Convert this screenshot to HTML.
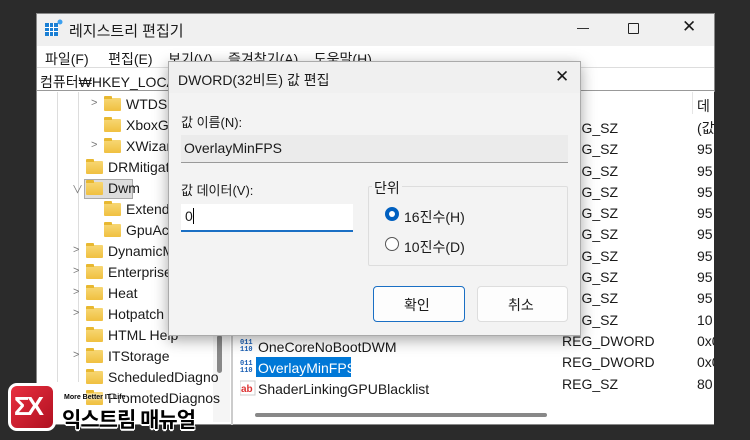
<!DOCTYPE html>
<html><head><meta charset="utf-8"><style>
*{margin:0;padding:0;box-sizing:border-box}
body{width:750px;height:440px;background:#2b2b2b;position:relative;overflow:hidden;font-family:"Liberation Sans","Noto Sans CJK KR",sans-serif;color:#1a1a1a}
.a{position:absolute;white-space:nowrap}
.t{font-size:14px}
.fold{position:absolute;width:17px;height:13px;background:linear-gradient(#f7d774,#f0c040);border-radius:1px}
.fold:before{content:"";position:absolute;left:0;top:-2px;width:8px;height:3px;background:#e8b830;border-radius:1px 1px 0 0}
.chev{position:absolute;font-size:11px;color:#777}
</style></head><body>
<div class="a" style="left:36px;top:13px;width:679px;height:412px;background:#fff;border:1px solid #888"></div>
<div class="a" style="left:37px;top:14px;width:677px;height:32px;background:#f0f0f0"></div>
<svg class="a" style="left:45px;top:19px" width="18" height="18"><rect x="0" y="4" width="13" height="13" fill="#1a7fd4"/><g stroke="#fff" stroke-width="1"><line x1="4.5" y1="4" x2="4.5" y2="17"/><line x1="8.5" y1="4" x2="8.5" y2="17"/><line x1="0" y1="8.5" x2="13" y2="8.5"/><line x1="0" y1="12.5" x2="13" y2="12.5"/></g><circle cx="15" cy="3" r="2.5" fill="#3ba0f0"/></svg>
<div class="a t" style="left:69px;top:20px;font-size:15px">레지스트리 편집기</div>
<div class="a" style="left:577px;top:28px;width:12px;height:1px;background:#333"></div>
<div class="a" style="left:628px;top:23px;width:11px;height:11px;border:1px solid #222;border-radius:1px"></div>
<div class="a" style="left:682px;top:17px;font-size:17px">✕</div>
<div class="a" style="left:37px;top:46px;width:677px;height:21px;background:#fff"></div>
<div class="a t" style="left:45px;top:49px">파일(F)&nbsp;&nbsp;&nbsp;&nbsp;&nbsp;편집(E)&nbsp;&nbsp;&nbsp;&nbsp;보기(V)&nbsp;&nbsp;&nbsp;&nbsp;즐겨찾기(A)&nbsp;&nbsp;&nbsp;&nbsp;도움말(H)</div>
<div class="a" style="left:37px;top:67px;width:677px;height:24px;background:#fff;border-top:1px solid #ddd;border-bottom:1px solid #999"></div>
<div class="a t" style="left:40px;top:72px">컴퓨터₩HKEY_LOCAL_MACHINE</div>
<div class="a" style="left:40px;top:92px;width:170px;height:330px;background:#fff;overflow:hidden"></div>
<div class="a" style="left:57px;top:92px;width:1px;height:290px;background:#ddd"></div>
<div class="a" style="left:78px;top:92px;width:1px;height:290px;background:#ddd"></div>
<div class="a" style="left:213px;top:92px;width:17px;height:330px;background:#f5f5f5"></div>
<div class="a" style="left:217px;top:335px;width:5px;height:38px;background:#888;border-radius:3px"></div>
<div class="a" style="left:231px;top:92px;width:2px;height:333px;background:#ccc"></div>
<div class="a" style="left:84px;top:179px;width:49px;height:20px;background:#ddd;border:1px solid #aaa"></div>
<div class="chev" style="left:91px;top:97px">&gt;</div><div class="fold" style="left:104px;top:98px"></div><div class="a t" style="left:126px;top:96px">WTDS</div>
<div class="fold" style="left:104px;top:119px"></div><div class="a t" style="left:126px;top:117px">XboxG</div>
<div class="chev" style="left:91px;top:139px">&gt;</div><div class="fold" style="left:104px;top:140px"></div><div class="a t" style="left:126px;top:138px">XWizar</div>
<div class="fold" style="left:86px;top:161px"></div><div class="a t" style="left:108px;top:159px">DRMitigat</div>
<div class="chev" style="left:72px;top:181px">∨</div><div class="fold" style="left:86px;top:182px"></div><div class="a t" style="left:108px;top:180px">Dwm</div>
<div class="fold" style="left:104px;top:203px"></div><div class="a t" style="left:126px;top:201px">Extend</div>
<div class="fold" style="left:104px;top:224px"></div><div class="a t" style="left:126px;top:222px">GpuAc</div>
<div class="chev" style="left:73px;top:244px">&gt;</div><div class="fold" style="left:86px;top:245px"></div><div class="a t" style="left:108px;top:243px">DynamicM</div>
<div class="chev" style="left:73px;top:265px">&gt;</div><div class="fold" style="left:86px;top:266px"></div><div class="a t" style="left:108px;top:264px">Enterprise</div>
<div class="chev" style="left:73px;top:286px">&gt;</div><div class="fold" style="left:86px;top:287px"></div><div class="a t" style="left:108px;top:285px">Heat</div>
<div class="chev" style="left:73px;top:307px">&gt;</div><div class="fold" style="left:86px;top:308px"></div><div class="a t" style="left:108px;top:306px">Hotpatch</div>
<div class="fold" style="left:86px;top:329px"></div><div class="a t" style="left:108px;top:327px">HTML Help</div>
<div class="chev" style="left:73px;top:349px">&gt;</div><div class="fold" style="left:86px;top:350px"></div><div class="a t" style="left:108px;top:348px">ITStorage</div>
<div class="fold" style="left:86px;top:371px"></div><div class="a t" style="left:108px;top:369px">ScheduledDiagno</div>
<div class="fold" style="left:86px;top:392px"></div><div class="a t" style="left:108px;top:390px">PromotedDiagnos</div>
<div class="a t" style="left:697px;top:96px">데</div>
<div class="a" style="left:692px;top:92px;width:1px;height:22px;background:#e5e5e5"></div>
<div class="a t" style="left:562px;top:118px;line-height:21.3px">REG_SZ<br>REG_SZ<br>REG_SZ<br>REG_SZ<br>REG_SZ<br>REG_SZ<br>REG_SZ<br>REG_SZ<br>REG_SZ<br>REG_SZ<br>REG_DWORD<br>REG_DWORD<br>REG_SZ</div>
<div class="a t" style="left:697px;top:118px;line-height:21.3px">(값<br>95<br>95<br>95<br>95<br>95<br>95<br>95<br>95<br>10<br>0x0<br>0x0<br>80</div>
<div class="a" style="left:714px;top:92px;width:36px;height:340px;background:#2b2b2b"></div>
<svg class="a" style="left:240px;top:337px" width="16" height="60"><g font-size="7" font-family="Liberation Mono" fill="#1a5fb4" font-weight="bold"><text x="0" y="7">011</text><text x="0" y="14">110</text><text x="0" y="28">011</text><text x="0" y="35">110</text></g><rect x="0" y="44" width="15" height="14" fill="#fff" stroke="#ccc"/><text x="1" y="55" font-size="10" fill="#d33" font-weight="bold" font-family="Liberation Sans">ab</text></svg>
<div class="a t" style="left:258px;top:339px">OneCoreNoBootDWM</div>
<div class="a" style="left:256px;top:357px;width:95px;height:20px;background:#0078d7"></div>
<div class="a t" style="left:258px;top:360px;color:#fff">OverlayMinFPS</div>
<div class="a t" style="left:258px;top:381px">ShaderLinkingGPUBlacklist</div>
<div class="a" style="left:255px;top:413px;width:292px;height:4px;background:#888;border-radius:2px"></div>
<div class="a" style="left:168px;top:61px;width:413px;height:275px;background:#f3f3f3;border:1px solid #aaa;box-shadow:0 4px 14px rgba(0,0,0,.35)"></div>
<div class="a" style="left:169px;top:62px;width:411px;height:31px;background:#f0f0f0"></div>
<div class="a t" style="left:178px;top:70px">DWORD(32비트) 값 편집</div>
<div class="a" style="left:555px;top:67px;font-size:17px">✕</div>
<div class="a t" style="left:181px;top:112px;font-size:13px">값 이름(N):</div>
<div class="a" style="left:181px;top:135px;width:387px;height:28px;background:#ebebeb;border-bottom:1px solid #999"></div>
<div class="a t" style="left:184px;top:140px">OverlayMinFPS</div>
<div class="a t" style="left:181px;top:180px;font-size:13px">값 데이터(V):</div>
<div class="a" style="left:181px;top:204px;width:172px;height:28px;background:#fff;border-bottom:2px solid #1a6fc4"></div>
<div class="a t" style="left:185px;top:208px">0<span style="display:inline-block;width:1px;height:16px;background:#000;vertical-align:-3px"></span></div>
<div class="a" style="left:368px;top:186px;width:200px;height:80px;border:1px solid #ddd;border-radius:2px"></div>
<div class="a t" style="left:372px;top:178px;background:#f3f3f3;padding:0 2px">단위</div>
<div class="a" style="left:385px;top:207px;width:14px;height:14px;border-radius:50%;background:#0060c0;border:4px solid #0060c0"><div style="width:6px;height:6px;background:#fff;border-radius:50%"></div></div>
<div class="a t" style="left:404px;top:207px">16진수(H)</div>
<div class="a" style="left:385px;top:237px;width:14px;height:14px;border-radius:50%;border:1px solid #555;background:#fff"></div>
<div class="a t" style="left:404px;top:237px">10진수(D)</div>
<div class="a" style="left:373px;top:286px;width:92px;height:36px;background:#fdfdfd;border:1px solid #1a6fc4;border-radius:4px"></div>
<div class="a t" style="left:404px;top:295px">확인</div>
<div class="a" style="left:477px;top:286px;width:91px;height:36px;background:#fdfdfd;border:1px solid #ddd;border-radius:4px"></div>
<div class="a t" style="left:508px;top:295px">취소</div>
<div class="a" style="left:8px;top:383px;width:48px;height:48px;background:linear-gradient(135deg,#e83040,#b01020);border:3px solid #fff;border-radius:9px"></div>
<div class="a" style="left:14px;top:391px;color:#fff;font-weight:bold;font-size:26px;font-family:'Liberation Sans';letter-spacing:-3px">ΣX</div>
<div class="a" style="left:64px;top:394px;font-size:7px;font-weight:bold;color:#000;text-shadow:0 0 2px #fff,0 0 2px #fff">More Better IT Life</div>
<div class="a" style="left:62px;top:404px;font-size:21px;font-weight:bold;color:#000;letter-spacing:-1px;text-shadow:1px 1px 0 #fff,-1px -1px 0 #fff,1px -1px 0 #fff,-1px 1px 0 #fff,0 2px 0 #fff">익스트림 매뉴얼</div>
</body></html>
